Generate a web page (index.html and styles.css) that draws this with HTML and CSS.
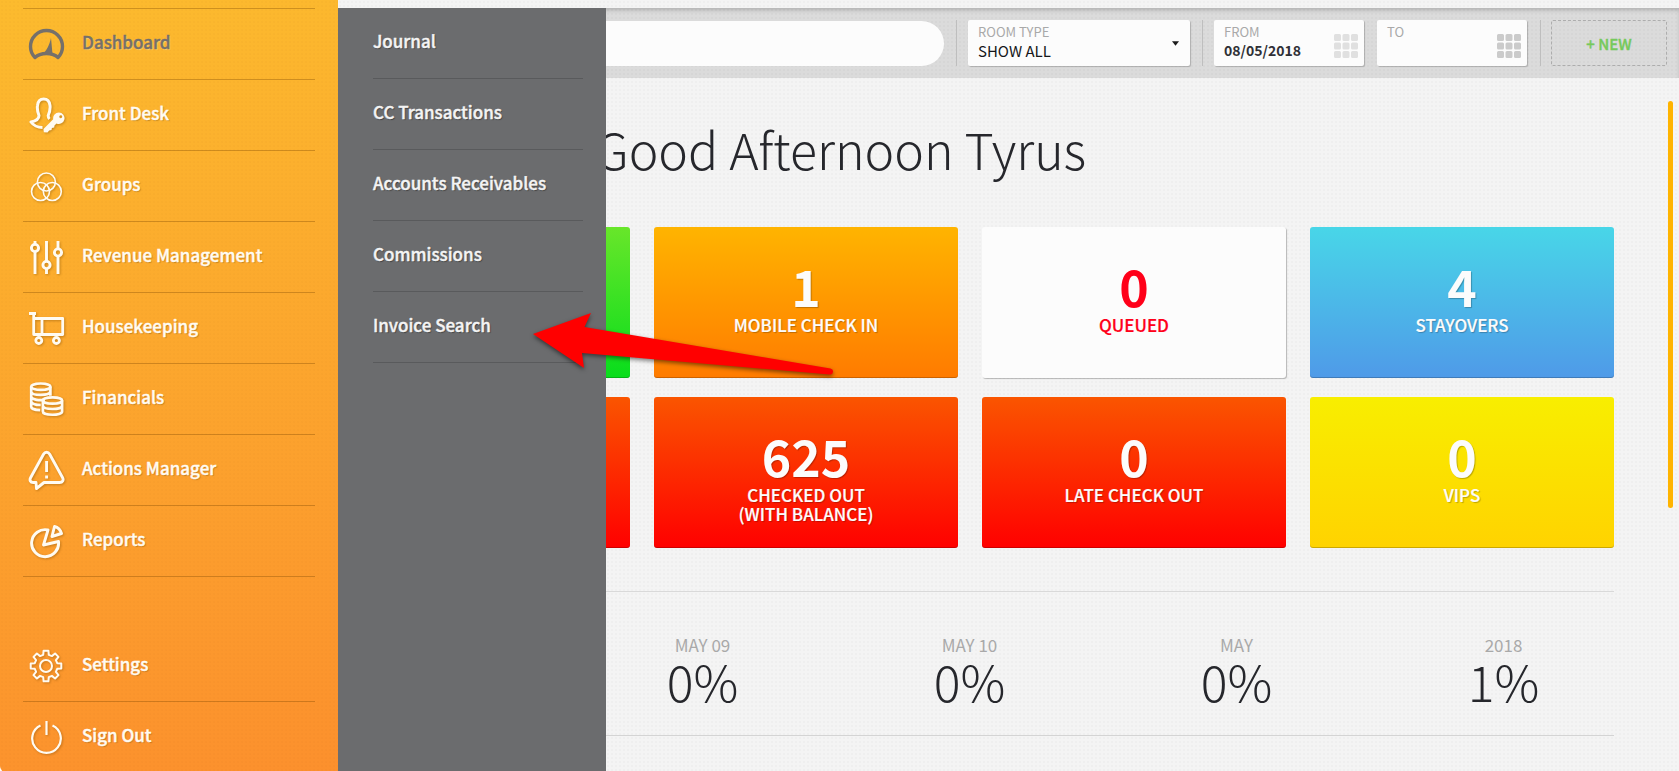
FILE: index.html
```html
<!DOCTYPE html>
<html lang="en">
<head>
  <title>Dashboard</title>
  <meta charset="utf-8">
  <meta name="viewport" content="width=device-width, initial-scale=1">
  <link rel="stylesheet" href="styles.css">
</head>
<body>
  <div class="app">
    <nav class="sidebar">
      <ul class="menu">
        <li class="menu-item active">
          <a href="#">
            <svg class="icon" viewBox="0 0 36 36" stroke-width="3.400">
              <path d="M7 31.500C4 28.500 2.500 24.500 2.500 20.500a16 16 0 0 1 32 0c0 4-1.500 8-4.500 11-3-3-7-4-11.500-4S10 28.500 7 31.500z"/>
              <path class="solid" d="M23 12l1.500 16h-10c4-3 7-9 8.500-16z"/>
            </svg>
            <span>Dashboard</span>
          </a>
        </li>
        <li class="menu-item">
          <a href="#">
            <svg class="icon" viewBox="0 0 36 36" stroke-width="3">
              <path d="M14.500 30.500C9 30.500 5.500 28.500 3 25c5-1 8-3 8-6.500C9.500 15 9 12 9.500 8.500 10 4 12.500 2 15.700 2s5.800 2 6.300 6.500c.4 3.500-.2 6.500-1.800 10 0 1.500.3 2.500 1.300 3.500"/>
              <path class="solid" fill-rule="evenodd" d="M31 15.500a5.700 5.700 0 1 1-2.500 10.900l-2 2-.3 2-2.300.5-.4 2.200-2.300.5-1.700 1.900-3.700-.2-.3-3.300 9.700-9.800A5.700 5.700 0 0 1 31 15.500zm1.700 2.700a1.500 1.500 0 1 0 .1 3 1.500 1.500 0 0 0-.1-3z"/>
            </svg>
            <span>Front Desk</span>
          </a>
        </li>
        <li class="menu-item">
          <a href="#">
            <svg class="icon" viewBox="0 0 36 36" stroke-width="1.600">
              <circle cx="18.400" cy="14" r="9"/>
              <circle cx="12.500" cy="23.500" r="9"/>
              <circle cx="24.300" cy="23.500" r="9"/>
            </svg>
            <span>Groups</span>
          </a>
        </li>
        <li class="menu-item">
          <a href="#">
            <svg class="icon" viewBox="0 0 36 36" stroke-width="2.900">
              <path d="M7 2v4M7 13v22M18.500 2v20M18.500 30v5M30 2v7M30 18v17"/>
              <circle cx="7" cy="9" r="3.600"/>
              <circle cx="18.500" cy="26" r="3.600"/>
              <circle cx="30" cy="13.500" r="3.600"/>
            </svg>
            <span>Revenue Management</span>
          </a>
        </li>
        <li class="menu-item">
          <a href="#">
            <svg class="icon" viewBox="0 0 36 36" stroke-width="2.800">
              <path d="M1 3.500h7M5.700 3v21.500h29V8.500h-29M14 8.500v16"/>
              <circle cx="10.800" cy="30.500" r="3"/>
              <circle cx="28.400" cy="30.500" r="3"/>
            </svg>
            <span>Housekeeping</span>
          </a>
        </li>
        <li class="menu-item">
          <a href="#">
            <svg class="icon" viewBox="0 0 36 36" stroke-width="2.700">
              <ellipse cx="12.800" cy="5.700" rx="9.600" ry="3.200"/>
              <path d="M3.200 5.700v20c0 2 4 3.300 9 3.400M22.400 5.700v9M3.200 10.700c1 4.300 18 4.300 19.200 0M3.200 15.700c1 3.500 9 4 13.500 3M3.200 20.700c1 2.500 5 3.300 9.500 3.300"/>
              <ellipse cx="24.500" cy="19.500" rx="9.600" ry="3.200"/>
              <path d="M14.900 19.500v11c0 4.300 19.200 4.300 19.200 0v-11M14.900 25c1 4 18 4 19.200 0"/>
            </svg>
            <span>Financials</span>
          </a>
        </li>
        <li class="menu-item">
          <a href="#">
            <svg class="icon" viewBox="0 0 36 36" stroke-width="2.900">
              <path d="M15.500 2.200c1.500-2.600 4.700-2.600 6.200 0L34.500 25.500c1.500 2.700 0 5-2.800 5H16L8.500 36.500 8 30.500H5.200c-2.800 0-4-2.300-2.500-5z"/>
              <path d="M18.600 9v11M18.600 23.500v3"/>
            </svg>
            <span>Actions Manager</span>
          </a>
        </li>
        <li class="menu-item">
          <a href="#">
            <svg class="icon" viewBox="0 0 36 36" stroke-width="2.900">
              <path d="M20 7A13.500 13.500 0 1 0 30.500 18.500L15.500 22z"/>
              <path d="M26.500 3.500c3.500.8 6 3.500 7 7l-9.500 3z"/>
            </svg>
            <span>Reports</span>
          </a>
        </li>
      </ul>
      <ul class="menu menu-bottom">
        <li class="menu-item">
          <a href="#">
            <svg class="icon" viewBox="0 0 36 36" stroke-width="2">
              <path d="M15.200 6.800l.4-4.100h4.800l.4 4.100 3.100 1.300 3.200-2.600 3.400 3.400-2.600 3.200 1.300 3.100 4.100.4v4.800l-4.100.4-1.300 3.100 2.600 3.200-3.400 3.400-3.200-2.600-3.100 1.300-.4 4.100h-4.800l-.4-4.100-3.100-1.300-3.200 2.600-3.400-3.400 2.600-3.200-1.300-3.100-4.100-.4v-4.800l4.100-.4 1.300-3.100-2.600-3.200 3.400-3.400 3.200 2.600z"/>
              <circle cx="18" cy="18" r="6"/>
            </svg>
            <span>Settings</span>
          </a>
        </li>
        <li class="menu-item">
          <a href="#">
            <svg class="icon" viewBox="0 0 36 36" stroke-width="2.200">
              <path d="M12.500 6.500a14.300 14.300 0 1 0 12 0M18.500 2v14"/>
            </svg>
            <span>Sign Out</span>
          </a>
        </li>
      </ul>
    </nav>

    <div class="main">
      <ul class="submenu">
        <li><a href="#">Journal</a></li>
        <li><a href="#">CC Transactions</a></li>
        <li><a href="#">Accounts Receivables</a></li>
        <li><a href="#">Commissions</a></li>
        <li><a href="#">Invoice Search</a></li>
      </ul>

      <form class="toolbar">
        <input class="search" type="search" aria-label="Search">
        <div class="field room">
          <label for="room-type">ROOM TYPE</label>
          <select id="room-type">
            <option>SHOW ALL</option>
          </select>
          <svg class="caret" viewBox="0 0 8 5"><path d="M0 0h8L4 5z"/></svg>
        </div>
        <div class="dates">
          <div class="field">
            <label for="from">FROM</label>
            <input id="from" type="text" value="08/05/2018">
            <svg class="calendar light" viewBox="0 0 24 24">
              <path d="M1.500 1.500h4v4h-4zM10 1.500h4v4h-4zM18.500 1.500h4v4h-4zM1.500 10h4v4h-4zM10 10h4v4h-4zM18.500 10h4v4h-4zM1.500 18.500h4v4h-4zM10 18.500h4v4h-4zM18.500 18.500h4v4h-4z"/>
            </svg>
          </div>
          <div class="field">
            <label for="to">TO</label>
            <input id="to" type="text">
            <svg class="calendar" viewBox="0 0 24 24">
              <path d="M1.500 1.500h4v4h-4zM10 1.500h4v4h-4zM18.500 1.500h4v4h-4zM1.500 10h4v4h-4zM10 10h4v4h-4zM18.500 10h4v4h-4zM1.500 18.500h4v4h-4zM10 18.500h4v4h-4zM18.500 18.500h4v4h-4z"/>
            </svg>
          </div>
        </div>
        <button class="new" type="button">+ NEW</button>
      </form>

      <main class="content">
        <h1>Good Afternoon Tyrus</h1>
        <div class="cards">
          <a href="#" class="card green"></a>
          <a href="#" class="card orange"><strong>1</strong><span>MOBILE CHECK IN</span></a>
          <a href="#" class="card white"><strong>0</strong><span>QUEUED</span></a>
          <a href="#" class="card blue"><strong>4</strong><span>STAYOVERS</span></a>
          <a href="#" class="card red"></a>
          <a href="#" class="card red"><strong>625</strong><span>CHECKED OUT<br>(WITH BALANCE)</span></a>
          <a href="#" class="card red"><strong>0</strong><span>LATE CHECK OUT</span></a>
          <a href="#" class="card yellow"><strong>0</strong><span>VIPS</span></a>
        </div>
        <div class="occupancy">
          <dl class="stats">
            <div><dt>MAY 09</dt><dd>0%</dd></div>
            <div><dt>MAY 10</dt><dd>0%</dd></div>
            <div><dt>MAY</dt><dd>0%</dd></div>
            <div><dt>2018</dt><dd>1%</dd></div>
          </dl>
        </div>
      </main>

      <div class="scrollbar"></div>
      <svg class="arrow" viewBox="0 0 310 64">
        <path d="M2 24L60 3l-6.500 14L299.500 58.500a3 3 0 0 1-1 6L51 43l2 15z"/>
      </svg>
    </div>
  </div>
</body>
</html>
```

FILE: styles.css
```css
* {
  margin: 0;
  padding: 0;
  box-sizing: border-box;
}

body {
  background-color: #FFFFFF;
  color: #26272C;
  font-family: "Noto Sans CJK SC", "Open Sans", sans-serif;
}

a {
  color: inherit;
  text-decoration: none;
}

ul {
  list-style: none;
}

.app {
  display: flex;
  min-height: 100vh;
  overflow: hidden;
}

/* sidebar */

.sidebar {
  flex: none;
  width: 338px;
  padding: 8px 23px 0;
  border-bottom-left-radius: 6px;
  background:
    radial-gradient(rgba(160, 90, 0, 0.03) 1px, transparent 1px) 0 0 / 4px 4px,
    linear-gradient(170deg, #FCBB2E, #FC902D);
  color: #FFFBF2;
  position: relative;
  z-index: 3;
}

.menu {
  border-top: 1px solid rgba(120, 70, 0, 0.35);
}

.menu-bottom {
  margin-top: 54px;
  border-top: 0;
}

.menu-item {
  border-bottom: 1px solid rgba(120, 70, 0, 0.35);
}

.menu-bottom .menu-item:last-child {
  border-bottom: 0;
}

.menu-item a {
  display: flex;
  align-items: center;
  gap: 18px;
  height: 70px;
  padding-left: 5px;
  font-size: 17px;
  line-height: 24px;
  font-weight: 500;
  -webkit-text-stroke: 0.4px;
  text-shadow: 1px 1px 1px rgba(120, 70, 0, 0.4);
}

.menu-item span {
  padding-bottom: 5px;
}

.menu-item.active {
  color: #75706A;
}

.menu-item.active a {
  text-shadow: 1px 1px 1px rgba(255, 230, 160, 0.5);
}

.icon {
  width: 36px;
  height: 36px;
  overflow: visible;
  fill: none;
  stroke: currentColor;
  stroke-linejoin: round;
  filter: drop-shadow(1px 1px 1px rgba(120, 70, 0, 0.4));
}

.active .icon {
  filter: none;
}

.icon .solid {
  fill: currentColor;
  stroke: none;
}

/* submenu */

.submenu {
  position: absolute;
  top: 8px;
  bottom: 0;
  left: 0;
  z-index: 2;
  width: 268px;
  padding: 0 23px 0 35px;
  background-color: #6B6C6E;
  color: #F4F4F4;
}

.submenu a {
  display: block;
  height: 71px;
  padding-top: 21px;
  border-bottom: 1px solid #595A5C;
  font-size: 17px;
  line-height: 24px;
  font-weight: 500;
  -webkit-text-stroke: 0.4px;
  text-shadow: 1px 1px 1px rgba(0, 0, 0, 0.4);
}

/* main */

.main {
  position: relative;
  flex: 1;
  min-width: 0;
  padding-top: 8px;
  background:
    radial-gradient(rgba(0, 0, 0, 0.02) 1px, transparent 1px) 0 0 / 4px 4px,
    #F4F4F4;
}

.toolbar {
  display: flex;
  align-items: center;
  gap: 24px;
  height: 70px;
  padding: 0 12px 0 150px;
  background-color: rgba(0, 0, 0, 0.1);
  box-shadow: inset 0 3px 4px -1px rgba(0, 0, 0, 0.2);
}

.search {
  flex: 1;
  min-width: 0;
  height: 45px;
  border: 0;
  border-radius: 23px;
  background-color: #FCFCFC;
}

.room,
.dates,
.new {
  position: relative;
}

.room::before,
.dates::before,
.new::before {
  content: "";
  position: absolute;
  top: 0;
  left: -12px;
  width: 1px;
  height: 46px;
  background-color: #BEBEBE;
}

.dates {
  display: flex;
  gap: 13px;
}

.field {
  position: relative;
  width: 150px;
  height: 46px;
  padding: 4px 10px 0;
  border-radius: 2px;
  background-color: #FCFCFC;
  box-shadow: 1px 1px 1px rgba(0, 0, 0, 0.2);
}

.field.room {
  width: 222px;
}

.field label {
  display: block;
  color: #A9A9A9;
  font-size: 13px;
  line-height: 16px;
}

.field select,
.field input {
  display: block;
  width: 100%;
  height: 22px;
  border: 0;
  background: none;
  appearance: none;
  color: #16171A;
  font-family: inherit;
  font-size: 15px;
  line-height: 22px;
}

.field input {
  width: 100px;
  height: 20px;
  color: #2F3036;
  font-size: 14px;
  font-weight: 700;
}

.caret {
  position: absolute;
  top: 21px;
  right: 11px;
  width: 7px;
  height: 5px;
  fill: #1B1B1B;
}

.calendar {
  position: absolute;
  top: 14px;
  right: 6px;
  width: 24px;
  height: 24px;
  fill: #CBCBCB;
  stroke: #CBCBCB;
  stroke-width: 3;
  stroke-linejoin: round;
}

.calendar.light {
  fill: #E0E0E0;
  stroke: #E0E0E0;
}

.new {
  width: 116px;
  height: 46px;
  border: 1px dashed #ADADAD;
  border-radius: 2px;
  background: none;
  color: #76C95C;
  font-family: inherit;
  font-size: 15px;
  font-weight: 500;
  -webkit-text-stroke: 0.4px;
}

.new::before {
  top: -1px;
}

.content {
  padding: 40px 65px 35px 0;
}

h1 {
  margin: 0 0 49px 257px;
  font-size: 50px;
  line-height: 60px;
  font-weight: 300;
}

.cards {
  display: grid;
  grid-template-columns: repeat(4, 1fr);
  gap: 19px 24px;
  margin-left: -12px;
}

.card {
  min-height: 151px;
  padding-top: 34px;
  border-radius: 3px;
  box-shadow: inset 0 -1px 0 rgba(0, 0, 0, 0.2);
  color: #FCFCFC;
  text-align: center;
  text-shadow: 1px 1px 1px rgba(0, 0, 0, 0.25);
}

.card strong {
  display: block;
  margin-bottom: 6px;
  font-size: 50px;
  line-height: 48px;
  font-weight: 700;
}

.card span {
  display: block;
  font-size: 17px;
  line-height: 19px;
  font-weight: 500;
  -webkit-text-stroke: 0.2px;
}

.green {
  background: linear-gradient(#68E62A, #08DD1C);
}

.orange {
  background: linear-gradient(#FFB400, #FF7B00);
}

.white {
  background: #FCFCFC;
  box-shadow: 1px 1px 1px rgba(0, 0, 0, 0.25);
  color: #FF0019;
  text-shadow: none;
}

.blue {
  background: linear-gradient(#48D6E8, #4F9AE8);
}

.red {
  background: linear-gradient(#FA5500, #FF0000);
}

.yellow {
  background: linear-gradient(#F8EE00, #FFD300);
}

.occupancy {
  margin-top: 43px;
  border-top: 1px solid #D9D9D9;
  border-bottom: 1px solid #D4D4D4;
}

.stats {
  display: grid;
  grid-template-columns: repeat(4, 1fr);
  margin: 0 -23px 0 231px;
  padding: 43px 0 30px;
  text-align: center;
}

.stats dt {
  color: #A9A9A9;
  font-size: 17px;
  line-height: 20px;
}

.stats dd {
  font-size: 50px;
  line-height: 50px;
  font-weight: 300;
}

.scrollbar {
  position: absolute;
  top: 101px;
  right: 6px;
  width: 5px;
  height: 407px;
  border-radius: 3px;
  background-color: #FFB400;
}

/* pointer drawn over the page */

.arrow {
  position: absolute;
  top: 310px;
  left: 193px;
  z-index: 4;
  width: 310px;
  height: 64px;
  overflow: visible;
  fill: #FF0000;
  filter: drop-shadow(0 2px 2px rgba(0, 0, 0, 0.5));
}
```
